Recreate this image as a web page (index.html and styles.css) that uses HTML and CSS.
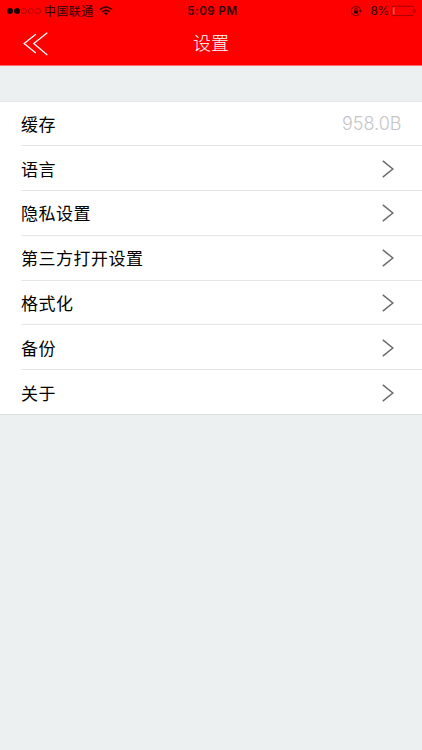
FILE: index.html
```html
<!DOCTYPE html>
<html lang="zh-CN">
<head>
<meta charset="utf-8">
<title>设置</title>
<link rel="stylesheet" href="styles.css">
</head>
<body>
<header class="header">
  <div class="status">
    <div class="status-left">
      <svg class="signal" width="36" height="8" viewBox="0 0 36 8"><g fill="#180000"><circle cx="3" cy="4" r="2.9"/><circle cx="10" cy="4" r="2.9"/></g><g fill="none" stroke="#a00000" stroke-width=".7"><circle cx="17" cy="4" r="2.6"/><circle cx="24" cy="4" r="2.6"/><circle cx="31.2" cy="4" r="2.6"/></g></svg>
      <span class="carrier">中国联通</span>
      <svg class="wifi" width="14" height="10" viewBox="0 0 14 10"><g fill="none" stroke="#300000" stroke-width="1.6"><path d="M1 3.7Q7-1.7 13 3.7"/><path d="M3.2 6Q7 2.6 10.8 6"/></g><path d="M4.9 7.3Q7 5.7 9.1 7.3L7 9.5Z" fill="#300000"/></svg>
    </div>
    <span class="time">5:09 PM</span>
    <div class="status-right">
      <svg class="lock" width="13" height="12" viewBox="0 0 13 12"><path d="M9.6 3A4.7 4.7 0 1 0 9.7 8.8M9 2.3A4.7 4.7 0 0 1 10.3 6" fill="none" stroke="#500000" stroke-width=".9"/><path d="M8.5 5.5h3.7l-1.8 2.3z" fill="#500000"/><path d="M4 5.5h4v3H4z" fill="#300000"/><path d="M4.8 5.5V4.2a1.2 1.2 0 0 1 2.4 0v1.3" fill="none" stroke="#300000" stroke-width=".8"/></svg>
      <span class="percent">8%</span>
      <svg class="battery" width="26" height="12" viewBox="0 0 26 12"><rect x=".7" y="1.2" width="21.8" height="9.4" rx="1.6" fill="none" stroke="#900000" stroke-width=".8"/><path d="M1.8 2.4h1.7v7H1.8z" fill="#ff5548"/><path d="M23.6 4.2q1.3.4 1.3 1.8t-1.3 1.8z" fill="#600000"/></svg>
    </div>
  </div>
  <nav class="navbar">
    <svg class="back" width="26" height="24" viewBox="0 0 26 24" fill="none" stroke="#fff" stroke-width="1.3"><path d="M12.8 2.2L1.2 11.5L12.8 21"/><path d="M24.3.7L10.8 11.5L24.3 23"/></svg>
    <h1 class="title">设置</h1>
  </nav>
</header>
<ul class="list">
  <li class="row"><span class="label">缓存</span><span class="value">958.0B</span></li>
  <li class="row"><span class="label">语言</span><svg class="chevron" viewBox="0 0 12 18"><path d="M.8.8L10.8 9L.8 17.2"/></svg></li>
  <li class="row"><span class="label">隐私设置</span><svg class="chevron" viewBox="0 0 12 18"><path d="M.8.8L10.8 9L.8 17.2"/></svg></li>
  <li class="row"><span class="label">第三方打开设置</span><svg class="chevron" viewBox="0 0 12 18"><path d="M.8.8L10.8 9L.8 17.2"/></svg></li>
  <li class="row"><span class="label">格式化</span><svg class="chevron" viewBox="0 0 12 18"><path d="M.8.8L10.8 9L.8 17.2"/></svg></li>
  <li class="row"><span class="label">备份</span><svg class="chevron" viewBox="0 0 12 18"><path d="M.8.8L10.8 9L.8 17.2"/></svg></li>
  <li class="row"><span class="label">关于</span><svg class="chevron" viewBox="0 0 12 18"><path d="M.8.8L10.8 9L.8 17.2"/></svg></li>
</ul>
</body>
</html>
```
FILE: styles.css
```css
* { box-sizing: border-box; }
body {
  margin: 0;
  min-height: 750px;
  background: #ecf0f1;
  font-family: "Liberation Sans", "Noto Sans CJK SC", sans-serif;
  color: #000;
}
svg { display: block; flex: none; }
.header {
  height: 66px;
  background: #f00;
  border-bottom: 1px solid #f86c6c;
}
.status {
  display: grid;
  grid-template-columns: 1fr auto 1fr;
  height: 22px;
  align-items: center;
  padding: 0 5px 0 7px;
  color: #300000;
}
.status-left, .status-right { display: flex; align-items: center; height: 22px; }
.status-right { justify-content: flex-end; }
.carrier {
  margin-left: 1px;
  font: 12px/22px "Noto Sans CJK SC", sans-serif;
  letter-spacing: 0.4px;
}
.wifi { margin: -1px 0 0 5px; }
.time {
  padding-left: 1px;
  font: 600 11.5px/22px Inter, sans-serif;
  letter-spacing: 0.5px;
}
.lock { margin-right: 1px; }
.percent {
  margin: 0 2px 0 7px;
  font: 12px/22px Inter, sans-serif;
  letter-spacing: -0.4px;
}
.navbar {
  display: grid;
  grid-template-columns: 1fr auto 1fr;
  align-items: center;
  height: 43px;
}
.back { margin-left: 23px; }
.title {
  margin: 0 0 3px;
  color: #fff;
  font: 300 18px/26px "Noto Sans CJK SC", sans-serif;
}
.list {
  list-style: none;
  margin: 35px 0 0;
  padding: 0 0 0 21px;
  background: #fff;
  border-top: 1px solid #e4e7e8;
  border-bottom: 1px solid #dde0e1;
}
.row {
  display: flex;
  align-items: center;
  justify-content: space-between;
  height: 44.75px;
  padding: 1px 28px 0 0;
  border-bottom: 1px solid #e6e6e6;
}
.row:first-child { padding: 0 20.5px 0 0; height: 44.25px; }
.row:last-child { border-bottom: 0; height: 44px; }
.label {
  font: 400 17px/26px "Noto Sans CJK SC", sans-serif;
  letter-spacing: 0.5px;
}
.value {
  color: #c5c5c9;
  font: 300 18px/26px Inter, sans-serif;
}
.chevron {
  width: 12px;
  height: 18px;
  fill: none;
  stroke: #6c6c6c;
  stroke-width: 1.5;
}
```
